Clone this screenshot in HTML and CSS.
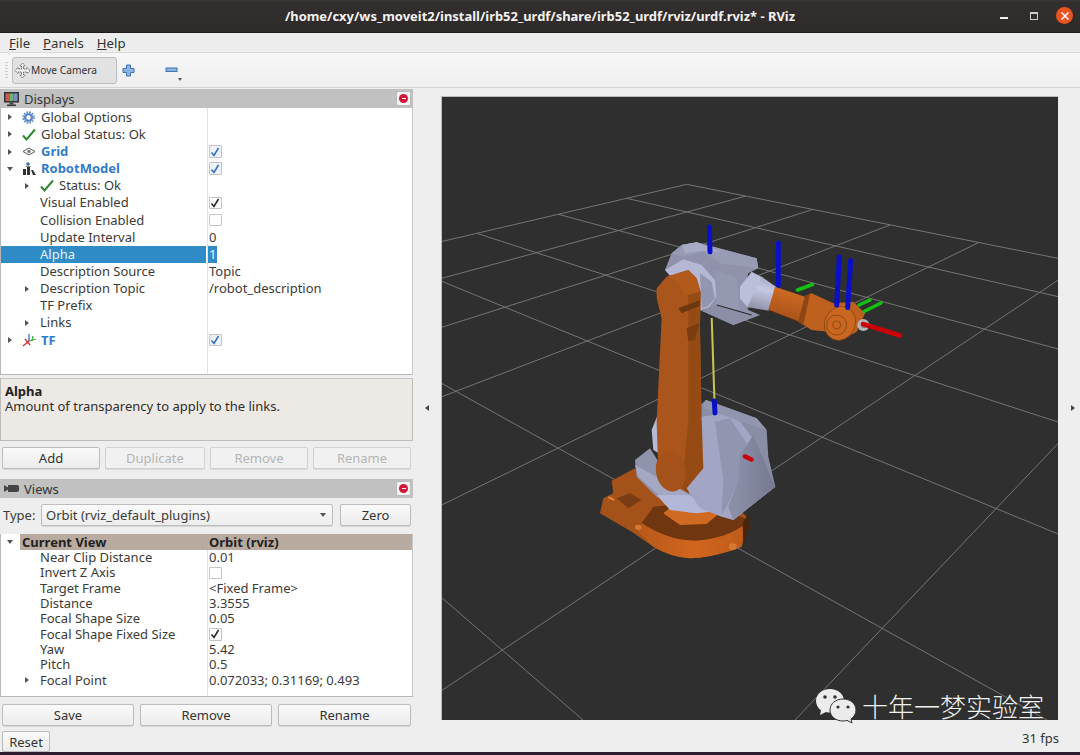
FILE: index.html
```html
<!DOCTYPE html>
<html lang="en">
<head>
<meta charset="utf-8">
<title>RViz</title>
<link rel="stylesheet" href="styles.css">
</head>
<body>
<div class="window">
  <header class="titlebar">
    <span class="title">/home/cxy/ws_moveit2/install/irb52_urdf/share/irb52_urdf/rviz/urdf.rviz* - RViz</span>
    <span class="win-min"></span>
    <span class="win-max"></span>
    <span class="win-close"><svg width="10" height="10" viewBox="0 0 10 10"><path d="M1.500 1.500l7 7M8.500 1.500l-7 7" stroke="#fff" stroke-width="1.500"/></svg></span>
  </header>
  <nav class="menubar">
    <span class="menu"><u>F</u>ile</span>
    <span class="menu"><u>P</u>anels</span>
    <span class="menu"><u>H</u>elp</span>
  </nav>
  <div class="toolbar">
    <span class="grip"></span>
    <button class="tool-active">
      <svg width="17" height="17" viewBox="0 0 17 17" fill="none" stroke="#666" stroke-width="1" stroke-dasharray="1.500 .7"><path d="M8.500 1l2.500 3H9.500v3H13V5.500l3 3-3 3V10H9.500v3H11l-2.500 3-2.500-3h1.500v-3H4v1.500l-3-3 3-3V7h3.500V4H6z" fill="#f4f4f4"/></svg>
      <span>Move Camera</span>
    </button>
    <svg class="tool-plus" width="13" height="13" viewBox="0 0 13 13"><path d="M4.500 1h4v3.500H12v4H8.500V12h-4V8.500H1v-4h3.500z" fill="#8db4e0" stroke="#3f74b5"/></svg>
    <svg class="tool-minus" width="13" height="6" viewBox="0 0 13 6"><rect x="1" y="1" width="11" height="3.500" fill="#8db4e0" stroke="#3f74b5"/></svg>
    <span class="tool-drop"></span>
  </div>
  <main class="main">
    <section class="dock">
      <div class="panel-head">
        <svg class="head-icon" width="17" height="16" viewBox="0 0 17 16"><rect x="1" y="1" width="15" height="10.500" fill="#333"/><rect x="2.500" y="2.500" width="4" height="7.500" fill="#c85a5a"/><rect x="6.500" y="2.500" width="4" height="7.500" fill="#6cb56c"/><rect x="10.500" y="2.500" width="4" height="7.500" fill="#7b8fc8"/><rect x="6.500" y="11.500" width="4" height="2" fill="#444"/><rect x="4" y="13.500" width="9" height="1.500" fill="#333"/></svg>
        <span class="head-text">Displays</span>
        <span class="head-close"><i></i></span>
      </div>
      <div class="tree tree-displays">
        <div class="row"><div class="name"><span class="arr right"></span><span class="ic"><svg width="13" height="13" viewBox="0 0 13 13"><circle cx="6.500" cy="6.500" r="3.400" fill="none" stroke="#5b86c4" stroke-width="2.400"/><circle cx="6.500" cy="6.500" r="5.500" fill="none" stroke="#5b86c4" stroke-width="1.500" stroke-dasharray="1.700 1.180"/><circle cx="6.500" cy="6.500" r="1.500" fill="#fff"/></svg></span>Global Options</div><div class="val"></div></div>
        <div class="row"><div class="name"><span class="arr right"></span><span class="ic"><svg width="14" height="13" viewBox="0 0 14 13"><path d="M1 7.500l3.500 4L13 1.500" fill="none" stroke="#2f8a2f" stroke-width="2"/></svg></span>Global Status: Ok</div><div class="val"></div></div>
        <div class="row"><div class="name link"><span class="arr right"></span><span class="ic"><svg width="14" height="9" viewBox="0 0 14 9"><path d="M1 4.500L7 1l6 3.500L7 8z" fill="none" stroke="#555"/><circle cx="7" cy="4.500" r="1.700" fill="#777"/></svg></span>Grid</div><div class="val"><span class="cb blue"><svg width="10" height="10" viewBox="0 0 10 10"><path d="M1.500 5.500L4 8.500 8.500 1" fill="none" stroke="#2f6fc0" stroke-width="1.500"/></svg></span></div></div>
        <div class="row"><div class="name link"><span class="arr down"></span><span class="ic"><svg width="15" height="14" viewBox="0 0 15 14"><circle cx="6" cy="2" r="1.800" fill="#3a6fb0"/><path d="M1 13V7h3v6zM5 13V5h3v8zM9 8h2l3 5h-3z" fill="#333"/><path d="M4 4.500h5" stroke="#888"/></svg></span>RobotModel</div><div class="val"><span class="cb blue"><svg width="10" height="10" viewBox="0 0 10 10"><path d="M1.500 5.500L4 8.500 8.500 1" fill="none" stroke="#2f6fc0" stroke-width="1.500"/></svg></span></div></div>
        <div class="row"><div class="name d1"><span class="arr right"></span><span class="ic2"><svg width="14" height="13" viewBox="0 0 14 13"><path d="M1 7.500l3.500 4L13 1.500" fill="none" stroke="#2f8a2f" stroke-width="2"/></svg></span>Status: Ok</div><div class="val"></div></div>
        <div class="row"><div class="name d1"><span class="arr none"></span>Visual Enabled</div><div class="val"><span class="cb"><svg width="10" height="10" viewBox="0 0 10 10"><path d="M1.500 5.500L4 8.500 8.500 1" fill="none" stroke="#222" stroke-width="1.500"/></svg></span></div></div>
        <div class="row"><div class="name d1"><span class="arr none"></span>Collision Enabled</div><div class="val"><span class="cb"></span></div></div>
        <div class="row"><div class="name d1"><span class="arr none"></span>Update Interval</div><div class="val">0</div></div>
        <div class="row selected"><div class="name d1"><span class="arr none"></span>Alpha</div><div class="val"><span class="sel-val">1</span></div></div>
        <div class="row"><div class="name d1"><span class="arr none"></span>Description Source</div><div class="val">Topic</div></div>
        <div class="row"><div class="name d1"><span class="arr right"></span>Description Topic</div><div class="val">/robot_description</div></div>
        <div class="row"><div class="name d1"><span class="arr none"></span>TF Prefix</div><div class="val"></div></div>
        <div class="row"><div class="name d1"><span class="arr right"></span>Links</div><div class="val"></div></div>
        <div class="row"><div class="name link"><span class="arr right"></span><span class="ic"><svg width="15" height="14" viewBox="0 0 15 14" fill="none" stroke-width="1.300"><path d="M7 8l7-2" stroke="#3fb03f"/><path d="M7 8V1" stroke="#3f6fd0"/><path d="M7 8l-6 5" stroke="#d03030"/><path d="M3 6l5 6" stroke="#d03030"/><path d="M11 3l-1 5" stroke="#3fb03f"/></svg></span>TF</div><div class="val"><span class="cb blue"><svg width="10" height="10" viewBox="0 0 10 10"><path d="M1.500 5.500L4 8.500 8.500 1" fill="none" stroke="#2f6fc0" stroke-width="1.500"/></svg></span></div></div>
      </div>
      <div class="help">
        <strong>Alpha</strong>
        <span>Amount of transparency to apply to the links.</span>
      </div>
      <div class="btn-row btn-row-a">
        <button class="btn b-add">Add</button>
        <button class="btn b-dup" disabled>Duplicate</button>
        <button class="btn b-rem" disabled>Remove</button>
        <button class="btn b-ren" disabled>Rename</button>
      </div>
      <div class="panel-head">
        <svg class="head-icon" width="17" height="9" viewBox="0 0 17 9"><path d="M1 1l4 2.500V1h9a2 2 0 0 1 2 2v3a2 2 0 0 1-2 2H5V5.500L1 8z" fill="#444"/></svg>
        <span class="head-text">Views</span>
        <span class="head-close"><i></i></span>
      </div>
      <div class="type-row">
        <span class="type-label">Type:</span>
        <div class="combo"><span>Orbit (rviz_default_plugins)</span><i></i></div>
        <button class="btn b-zero">Zero</button>
      </div>
      <div class="tree tree-views">
        <div class="row head"><div class="name"><span class="arr down"></span><b class="head-cell">Current View</b></div><div class="val"><b>Orbit (rviz)</b></div></div>
        <div class="row"><div class="name d1"><span class="arr none"></span>Near Clip Distance</div><div class="val">0.01</div></div>
        <div class="row"><div class="name d1"><span class="arr none"></span>Invert Z Axis</div><div class="val"><span class="cb"></span></div></div>
        <div class="row"><div class="name d1"><span class="arr none"></span>Target Frame</div><div class="val">&lt;Fixed Frame&gt;</div></div>
        <div class="row"><div class="name d1"><span class="arr none"></span>Distance</div><div class="val">3.3555</div></div>
        <div class="row"><div class="name d1"><span class="arr none"></span>Focal Shape Size</div><div class="val">0.05</div></div>
        <div class="row"><div class="name d1"><span class="arr none"></span>Focal Shape Fixed Size</div><div class="val"><span class="cb"><svg width="10" height="10" viewBox="0 0 10 10"><path d="M1.500 5.500L4 8.500 8.500 1" fill="none" stroke="#222" stroke-width="1.500"/></svg></span></div></div>
        <div class="row"><div class="name d1"><span class="arr none"></span>Yaw</div><div class="val">5.42</div></div>
        <div class="row"><div class="name d1"><span class="arr none"></span>Pitch</div><div class="val">0.5</div></div>
        <div class="row"><div class="name d1"><span class="arr right"></span>Focal Point</div><div class="val">0.072033; 0.31169; 0.493</div></div>
      </div>
      <div class="btn-row btn-row-b">
        <button class="btn b-save">Save</button>
        <button class="btn b-remove">Remove</button>
        <button class="btn b-rename">Rename</button>
      </div>
    </section>
    <div class="handle"><span class="tri-left"></span></div>
    <div class="viewport">
      <svg class="scene" width="618" height="624" viewBox="441 96 618 624">
        <defs>
          <linearGradient id="cyl" gradientUnits="userSpaceOnUse" x1="440" y1="205" x2="415" y2="300">
            <stop offset="0" stop-color="#a9acc6"/>
            <stop offset=".35" stop-color="#c6c9e2"/>
            <stop offset="1" stop-color="#8e91a8"/>
          </linearGradient>
          <linearGradient id="fore" gradientUnits="userSpaceOnUse" x1="510" y1="240" x2="490" y2="325">
            <stop offset="0" stop-color="#cf6a22"/>
            <stop offset="1" stop-color="#a8531a"/>
          </linearGradient>
          <linearGradient id="shellr" gradientUnits="userSpaceOnUse" x1="440" y1="300" x2="556" y2="300">
            <stop offset="0" stop-color="#8b8ea7"/>
            <stop offset="1" stop-color="#757890"/>
          </linearGradient>
          <linearGradient id="wall" gradientUnits="userSpaceOnUse" x1="600" y1="380" x2="920" y2="380">
            <stop offset="0" stop-color="#b85a1a"/>
            <stop offset=".5" stop-color="#d2651e"/>
            <stop offset="1" stop-color="#bd5c1b"/>
          </linearGradient>
        </defs>
        <g fill="none" stroke="#757573" stroke-width="1">
          <path d="M441 241.700L686.700 184.300 1059 258.500"/>
          <path d="M441 278.500L746 196"/>
          <path d="M441 327.500L813.300 209.300"/>
          <path d="M441 397L890 225"/>
          <path d="M441 505.300L978.300 242.700"/>
          <path d="M441 691L1059 279.500"/>
          <path d="M795 720L1059 442.500"/>
          <path d="M626.700 198.300L1059 296.800"/>
          <path d="M558.300 214.300L1059 349.200"/>
          <path d="M476.700 233.300L1059 422.300"/>
          <path d="M441 281L1059 534.300"/>
          <path d="M441 383L1047 720"/>
          <path d="M441 597L583 720"/>
        </g>
        <g transform="translate(440 410) scale(.3333)">
          <path d="M515 212L585 175 640 225 760 300 900 300 920 320 925 350 905 410 880 420Q800 445 750 445 690 440 640 410L575 365 480 310 490 265 520 250z" fill="#a5521a"/>
          <path d="M605 340L640 290 700 285 850 300 915 325 912 345Q860 385 770 392 690 395 605 340z" fill="#6f3610"/>
          <path d="M605 340Q690 395 770 392 860 385 912 345L905 410 880 420Q800 445 750 445 690 440 640 410L595 365z" fill="url(#wall)"/>
          <path d="M670 310L720 345 800 342 835 312 780 290 700 285z" fill="#d06a22"/>
          <path d="M530 265L570 250 605 270 565 295z" fill="#7a3c12"/>
          <path d="M505 258L525 268 520 272 505 265z" fill="#e8843a"/>
          <path d="M585 352a10 8 0 1 0 20 0a10 8 0 1 0-20 0M866 410a12 10 0 1 0 24 0a12 10 0 1 0-24 0" fill="#d57a33"/>
          <path d="M908 340L925 312 928 350 910 405z" fill="#4a2408"/>
        </g>
        <g transform="translate(590 380) scale(.3333)">
          <path d="M205 100L185 150 190 210 240 240 300 200 300 60z" fill="#b5b9d4"/>
          <path d="M135 240L180 205 215 260 300 320 340 380 300 400 200 350 140 290z" fill="#8f93ab"/>
          <path d="M135 255L200 290 290 340 340 385 270 375 200 340 145 290z" fill="#a4a8c2"/>
          <path d="M200 345L300 345 360 395 320 400 240 390z" fill="#b4b8d8"/>
          <path d="M330 75L350 60 500 115 530 150 535 230 556 320 430 420 330 300z" fill="#8a8da6"/>
        </g>
        <path d="M711.700 318L714.500 402" stroke="#c9c64e" stroke-width="2" fill="none"/>
        <g transform="translate(620 210) scale(.3333)">
          <path d="M135 180L155 130 185 105 230 97 410 145 415 175 385 190 370 260 385 300 420 315 340 345 240 300z" fill="#8f92aa"/>
          <path d="M155 130L185 105 230 97 410 145 415 175 340 165 300 160 250 125 190 140z" fill="#989bb4"/>
          <path d="M185 105L230 97 300 125 250 122 195 130z" fill="#a8abc5"/>
          <path d="M135 180L190 148 245 165 285 210 290 260 265 295 240 300z" fill="#b5b8d4"/>
          <path d="M240 190L275 215 285 265 262 290 245 295z" fill="#9396b1"/>
          <path d="M285 180L350 200 360 300 290 285z" fill="#9598b1"/>
          <path d="M240 300L290 287 400 315 420 315 340 345z" fill="#8b8ea6"/>
          <path d="M290 285L395 315" stroke="#222" stroke-width="3" fill="none"/>
          <path d="M360 230L395 185 430 203 385 295 360 265z" fill="#bcbfda"/>
          <path d="M425 200L470 232 448 302 382 292z" fill="url(#cyl)"/>
          <path d="M445 300L465 230 555 260 535 335z" fill="url(#fore)"/>
          <path d="M445 300L535 335" stroke="#4a2408" stroke-width="2" fill="none"/>
          <path d="M535 335L555 258 575 250 640 280 700 275 735 310 710 365 660 392 625 365 575 360z" fill="#c0601e"/>
          <path d="M535 335L555 258 570 252 550 345z" fill="#8f4614"/>
          <ellipse cx="660" cy="340" rx="46" ry="52" transform="rotate(25 660 340)" fill="#c9661f" stroke="#7f3f10" stroke-width="2"/>
          <circle cx="650" cy="345" r="30" fill="none" stroke="#8f4a16" stroke-width="3"/>
          <circle cx="650" cy="345" r="12" fill="none" stroke="#8f4a16" stroke-width="3"/>
          <circle cx="730" cy="345" r="18" fill="#b5b5b5"/>
          <circle cx="732" cy="345" r="9" fill="#8a7070"/>
        </g>
        <g transform="translate(440 95) scale(.3333)">
          <path d="M650 580L680 545 745 525 770 550 782 590 780 700 785 980 795 1120 745 1195 700 1170 655 1130 650 980 665 670 650 610z" fill="#a9551b"/>
          <path d="M745 600L782 590 780 700 785 980 795 1120 745 1195 725 1180 745 980z" fill="#964b15"/>
          <path d="M680 545L745 525 770 550 782 590 735 600 710 560z" fill="#b25a1c"/>
          <path d="M715 640L780 615 780 632 725 655z" fill="#6e3710"/>
          <path d="M740 700L778 685 765 735 745 738z" fill="#7a3c10"/>
        </g>
        <g transform="translate(590 380) scale(.3333)">
          <path d="M205 235a40 55 -10 0 0 75 78a40 55 -10 0 0-75-78z" fill="#a5521a"/>
          <path d="M335 110L400 100 450 125 500 190 556 320 430 420 395 410 330 385 290 325 340 265z" fill="#a2a6c4"/>
          <path d="M375 125L420 115 470 190 445 300 415 370 395 405 400 300z" fill="#9295b0"/>
          <path d="M450 225L490 165 556 320 430 420 415 380 445 300z" fill="url(#shellr)"/>
          <path d="M345 60L500 115 530 150 470 130 340 85z" fill="#9295ae"/>
        </g>
        <g fill="none" stroke-linecap="round">
          <path d="M709.500 227L710 252M778.300 243V285M839.300 257L836.700 305M850.700 260.500L847.700 307.500M714.300 401L715 413" stroke="#0a10c8" stroke-width="5"/>
          <path d="M797.500 290L812.500 284.500M859 305L870 300M864 311.500L881 303" stroke="#12c212" stroke-width="3.500"/>
          <path d="M863 324L900 335.500M745 456.500L751.500 459.500" stroke="#cc0008" stroke-width="4.500"/>
        </g>
      </svg>
    </div>
    <div class="handle-r"><span class="tri-right"></span></div>
  </main>
  <footer class="statusbar">
    <button class="btn b-reset">Reset</button>
    <span class="fps">31 fps</span>
  </footer>
  <div class="strip"></div>
</div>
<div class="watermark">
  <svg width="43" height="36" viewBox="0 0 43 36"><path d="M15 1C7 1 1 6.500 1 13c0 4 2 7 5 9.500L5 27l6-3c1.500.4 3 .6 4 .6 8 0 14-5 14-11.600S23 1 15 1z" fill="#ececec"/><path d="M28 11c-7.500 0-13 4.800-13 11s5.500 11 13 11c1.500 0 3-.2 4-.6l5 2.600-1-4c3-2 5-5.500 5-9 0-6.200-5.500-11-13-11z" fill="#ececec" stroke="#333" stroke-width="1"/><circle cx="10" cy="9" r="1.800" fill="#333"/><circle cx="20" cy="9" r="1.800" fill="#333"/><circle cx="23" cy="19" r="1.600" fill="#333"/><circle cx="33" cy="19" r="1.600" fill="#333"/></svg>
  <span>十年一梦实验室</span>
</div>
</body>
</html>
```

FILE: styles.css
```css
* { box-sizing: border-box; }
html, body { margin: 0; padding: 0; }
body {
  width: 1080px;
  height: 755px;
  overflow: hidden;
  position: relative;
  font-family: "Noto Sans", "Liberation Sans", sans-serif;
  font-size: 13px;
  color: #3c3b37;
  background: #eeeeee;
}
.window { display: flex; flex-direction: column; height: 755px; }

/* title bar */
.titlebar {
  height: 33px;
  flex: none;
  background: linear-gradient(#3b3837 0, #322f2e 2px, #2d2a29 100%);
  border-bottom: 1px solid #1f1d1c;
  display: flex;
  align-items: center;
  position: relative;
  color: #f2f2f2;
}
.title { width: 100%; text-align: center; font-weight: 700; font-size: 12.950px; }
.win-min { position: absolute; left: 1000px; top: 17px; width: 8px; height: 2px; background: #eee; }
.win-max { position: absolute; left: 1030px; top: 12px; width: 8px; height: 8px; border: 1px solid #ccc; border-top-width: 2px; }
.win-close { position: absolute; left: 1056px; top: 7px; width: 17px; height: 17px; border-radius: 50%; background: #e95420; display: flex; align-items: center; justify-content: center; }

/* menu */
.menubar { height: 20px; flex: none; background: #ededed; display: flex; align-items: center; padding: 0 0 0 9px; gap: 13px; border-bottom: 1px solid #dadada; color: #333; font-size: 13.200px; }

/* toolbar */
.toolbar { height: 35px; flex: none; background: linear-gradient(#f7f7f7, #efefef); border-bottom: 1px solid #d4d4d4; display: flex; align-items: center; position: relative; padding-left: 5px; }
.grip { width: 3px; height: 16px; margin-right: 4px; background: repeating-linear-gradient(#cfcfcf 0 1px, transparent 1px 3px); }
.tool-active { width: 105px; height: 27px; padding: 0 0 0 1px; border: 1px solid #bdbdbd; border-radius: 3px; background: #e2e2e2; display: flex; align-items: center; gap: 0; font: 10.200px "Noto Sans", sans-serif; color: #333; }
.tool-plus { margin-left: 5px; }
.tool-minus { margin-left: 30px; }
.tool-drop { position: absolute; left: 178px; top: 25px; border: 2.500px solid transparent; border-top: 3px solid #555; border-bottom: 0; }

/* dock */
.main { flex: 1; display: flex; min-height: 0; }
.dock { width: 413px; flex: none; display: flex; flex-direction: column; padding-top: 1px; }
.panel-head { height: 19px; flex: none; background: #c1c1c1; display: flex; align-items: center; position: relative; padding-left: 3px; color: #333; }
.head-icon { flex: none; width: 17px; }
.head-text { margin-left: 4px; font-size: 13px; }
.head-close { position: absolute; right: 2px; top: 2px; width: 15px; height: 15px; background: #f4f4f4; border: 1px solid #bbb; border-radius: 2px; display: flex; align-items: center; justify-content: center; }
.head-close i { width: 9px; height: 9px; border-radius: 50%; background: #d01838; position: relative; }
.head-close i::after { content: ""; position: absolute; left: 2.500px; top: 4px; width: 4px; height: 1px; background: #fff; }

.tree { background: #fff linear-gradient(#e2e2e2, #e2e2e2) 206px 0 / 1px 100% no-repeat; border: 1px solid #b8b8b8; border-top: 0; border-right-color: #c8c8c8; color: #3c3b37; }
.tree-displays { height: 267px; padding-top: .7px; }
.tree-displays .row { height: 17.150px; }
.tree-views { height: 163px; }
.tree-views .row { height: 15.330px; }
.tree-views .row.head { height: 16px; background: linear-gradient(#b9aba0, #b9aba0) 19px 0 no-repeat; color: #222; }
.row { display: grid; grid-template-columns: 205px 1fr; align-items: center; line-height: 1; white-space: nowrap; }
.row.selected .name { background: #308cc6; color: #e6f2fa; height: 100%; }
.name { display: flex; align-items: center; height: 100%; }
.name.d1 { padding-left: 16px; }
.name.link { color: #2f7cc9; font-weight: 700; }
.head-cell { margin-left: 3px; }
.val { padding-left: 3px; display: flex; align-items: center; height: 100%; }
.arr { width: 18px; flex: none; display: flex; justify-content: center; align-items: center; height: 100%; }
.arr.none { width: 23px; }
.arr.right::before { content: ""; border: 3.500px solid transparent; border-left: 4px solid #555; border-right: 0; }
.arr.down::before { content: ""; border: 3.500px solid transparent; border-top: 4px solid #555; border-bottom: 0; }
.d1 .arr.right { width: 23px; justify-content: flex-start; padding-left: 8px; }
.ic { width: 22px; flex: none; display: flex; align-items: center; padding-left: 3px; }
.ic2 { width: 19px; flex: none; display: flex; align-items: center; }
.cb { width: 12.500px; height: 12.500px; border: 1px solid #c4c4c4; background: #fff; border-radius: 1px; display: flex; align-items: center; justify-content: center; }
.cb.blue { background: #eef2f8; }
.sel-val { background: #308cc6; color: #e6f2fa; margin-left: -1px; height: 17px; line-height: 17px; width: 9px; display: block; padding-left: 1px; }

.help { height: 63px; flex: none; margin-top: 3px; background: #ede9e4; border: 1px solid #bdbbb8; border-top: 1px solid #c9c6c2; padding: 5px 4px 4px; display: flex; flex-direction: column; color: #2e2e2e; line-height: 15px; font-size: 13px; }
.help strong { color: #222; }

.btn { height: 22px; padding: 0; border: 1px solid #bcbcbc; border-radius: 2px; background: linear-gradient(#fafafa, #ececec); font: 13px "Noto Sans", sans-serif; color: #333; box-shadow: 0 1px 0 #d8d8d8; }
.btn:disabled { color: #b5b5b5; border-color: #d2d2d2; background: #f1f1f1; }
.btn-row { display: flex; flex: none; padding: 0 2px; }
.btn-row-a { margin-top: 6px; gap: 5px; margin-bottom: 10px; }
.b-add { width: 98px; }
.b-dup { width: 100px; }
.b-rem { width: 98px; }
.b-ren { width: 98px; }

.type-row { display: flex; align-items: center; height: 36px; flex: none; padding: 0 2px 3px 3px; }
.type-label { width: 38px; }
.combo { width: 292px; height: 22px; border: 1px solid #bcbcbc; border-radius: 2px; background: linear-gradient(#fafafa, #ededed); display: flex; align-items: center; justify-content: space-between; padding: 0 6px 0 4px; box-shadow: 0 1px 0 #d8d8d8; }
.combo i { border: 3.500px solid transparent; border-top: 4px solid #555; border-bottom: 0; }
.b-zero { width: 71px; margin-left: 7px; }

.btn-row-b { margin-top: 7px; gap: 6px; }
.b-save { width: 132px; }
.b-remove { width: 132px; }
.b-rename { width: 133px; }

/* viewport */
.handle { width: 28px; flex: none; display: flex; align-items: center; justify-content: center; }
.tri-left { border: 3.500px solid transparent; border-right: 4px solid #444; border-left: 0; }
.handle-r { width: 22px; flex: none; display: flex; align-items: center; justify-content: center; }
.tri-right { border: 3.500px solid transparent; border-left: 4px solid #444; border-right: 0; margin-left: 8px; }
.viewport { width: 617px; flex: none; margin-top: 8px; height: 624px; background: #2f2f2f; border-top: 1px solid #bbb; border-left: 1px solid #bbb; overflow: hidden; }
.scene { display: block; filter: blur(.35px); margin: -1px 0 0 -1px; }

/* status */
.statusbar { height: 24px; flex: none; display: flex; justify-content: space-between; padding: 0 21px 0 2px; background: #eeeeee; }
.b-reset { width: 48px; height: 21px; align-self: flex-end; }
.fps { font-size: 13px; color: #333; line-height: 20px; }
.strip { height: 3px; flex: none; background: #2c1a2f; }

/* watermark */
.watermark { position: absolute; left: 815px; top: 688px; display: flex; align-items: center; gap: 4px; color: #f2f2f2; font-family: "Noto Sans CJK SC", sans-serif; font-size: 26px; line-height: 36px; white-space: nowrap; font-weight: 300; }
```
